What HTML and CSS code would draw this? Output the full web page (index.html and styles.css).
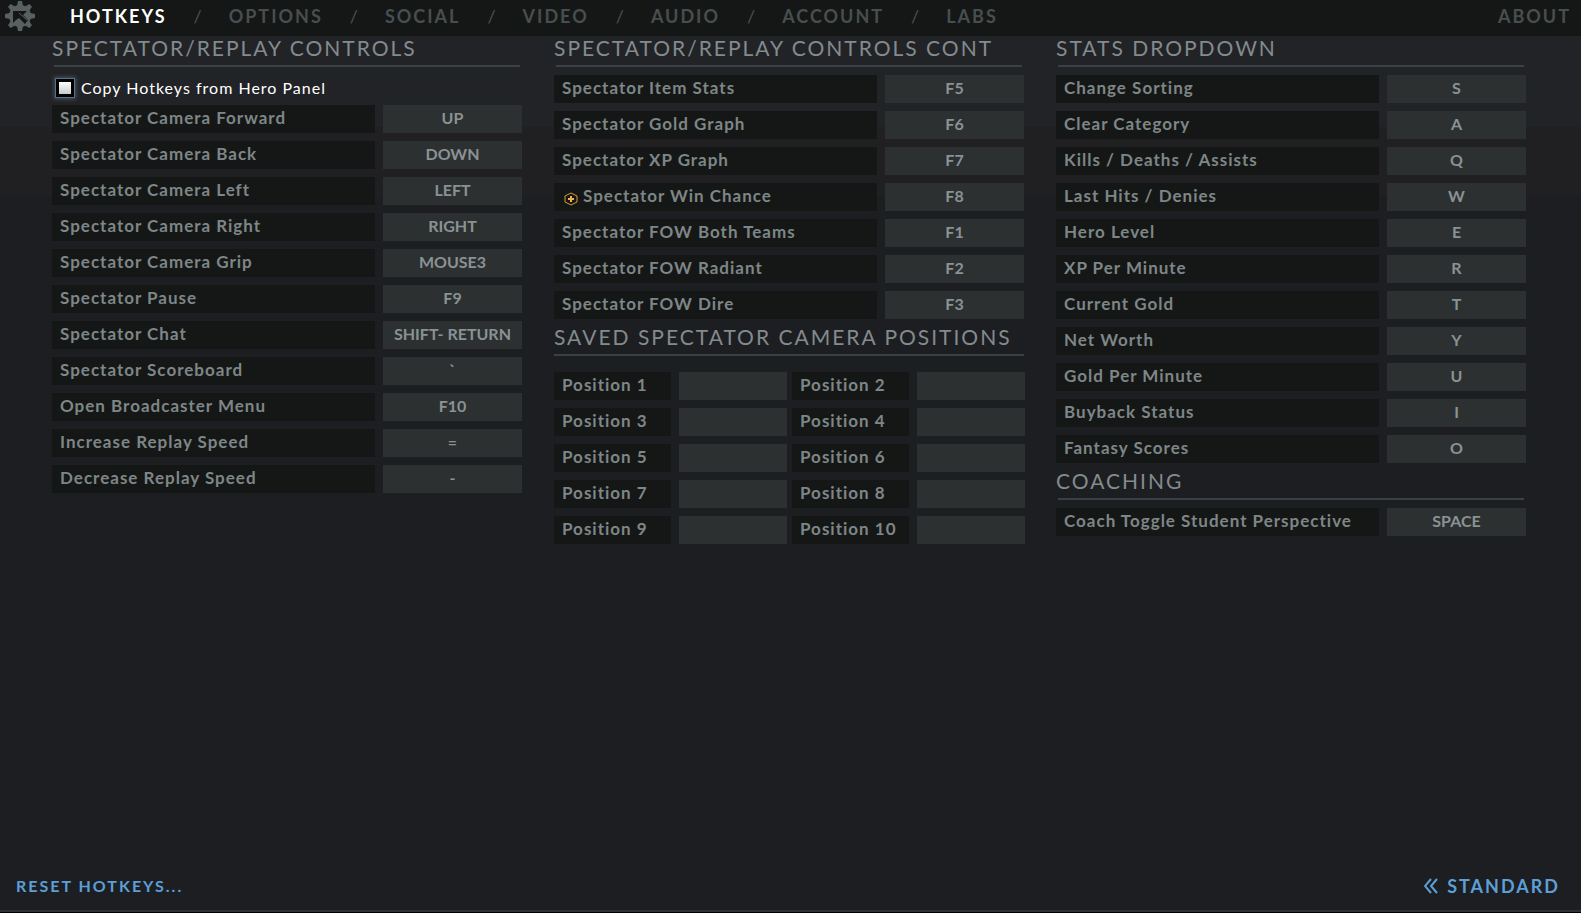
FILE: index.html
```html
<!DOCTYPE html>
<html lang="en">
<head>
<meta charset="utf-8">
<title>Settings - Hotkeys</title>
<link rel="stylesheet" href="styles.css">
</head>
<body>

<header class="topbar">
  <svg class="gear" viewBox="0 0 30 30" aria-hidden="true">
    <g fill="#596062">
      <circle cx="15" cy="15" r="11"/>
      <path d="M12 5 L13 0 H17 L18 5 V25 L17 30 H13 L12 25 Z"/>
      <path d="M12 5 L13 0 H17 L18 5 V25 L17 30 H13 L12 25 Z" transform="rotate(45 15 15)"/>
      <path d="M12 5 L13 0 H17 L18 5 V25 L17 30 H13 L12 25 Z" transform="rotate(90 15 15)"/>
      <path d="M12 5 L13 0 H17 L18 5 V25 L17 30 H13 L12 25 Z" transform="rotate(135 15 15)"/>
    </g>
    <path d="M8 10 H22 L18 14 L23 19 L20 23 L14 17 L11 19 L8 22 Z" fill="#151716"/>
    <path d="M14 12 L22 19" stroke="#596062" stroke-width="1"/>
  </svg>
  <nav class="tabs">
    <a class="tab active" href="#hotkeys">HOTKEYS</a>
    <span class="sep">/</span>
    <a class="tab" href="#options">OPTIONS</a>
    <span class="sep">/</span>
    <a class="tab" href="#social">SOCIAL</a>
    <span class="sep">/</span>
    <a class="tab" href="#video">VIDEO</a>
    <span class="sep">/</span>
    <a class="tab" href="#audio">AUDIO</a>
    <span class="sep">/</span>
    <a class="tab" href="#account">ACCOUNT</a>
    <span class="sep">/</span>
    <a class="tab" href="#labs">LABS</a>
  </nav>
  <a class="tab about" href="#about">ABOUT</a>
</header>

<main class="columns">
  <section class="column">
    <h2>SPECTATOR/REPLAY CONTROLS</h2>
    <label class="check"><input type="checkbox" checked> Copy Hotkeys from Hero Panel</label>
    <div class="bind"><label for="cam-forward">Spectator Camera Forward</label><button id="cam-forward">UP</button></div>
    <div class="bind"><label for="cam-back">Spectator Camera Back</label><button id="cam-back">DOWN</button></div>
    <div class="bind"><label for="cam-left">Spectator Camera Left</label><button id="cam-left">LEFT</button></div>
    <div class="bind"><label for="cam-right">Spectator Camera Right</label><button id="cam-right">RIGHT</button></div>
    <div class="bind"><label for="cam-grip">Spectator Camera Grip</label><button id="cam-grip">MOUSE3</button></div>
    <div class="bind"><label for="pause">Spectator Pause</label><button id="pause">F9</button></div>
    <div class="bind"><label for="chat">Spectator Chat</label><button id="chat">SHIFT- RETURN</button></div>
    <div class="bind"><label for="scoreboard">Spectator Scoreboard</label><button id="scoreboard">`</button></div>
    <div class="bind"><label for="broadcaster">Open Broadcaster Menu</label><button id="broadcaster">F10</button></div>
    <div class="bind"><label for="speed-up">Increase Replay Speed</label><button id="speed-up">=</button></div>
    <div class="bind"><label for="speed-down">Decrease Replay Speed</label><button id="speed-down">-</button></div>
  </section>

  <section class="column">
    <h2>SPECTATOR/REPLAY CONTROLS CONT</h2>
    <div class="bind"><label for="item-stats">Spectator Item Stats</label><button id="item-stats">F5</button></div>
    <div class="bind"><label for="gold-graph">Spectator Gold Graph</label><button id="gold-graph">F6</button></div>
    <div class="bind"><label for="xp-graph">Spectator XP Graph</label><button id="xp-graph">F7</button></div>
    <div class="bind">
      <label for="win-chance"><svg class="plus" viewBox="0 0 14 14" aria-hidden="true"><path d="M7 1 L13 4 V10 L7 13 L1 10 V4 Z" fill="none" stroke="#d79a3c"/><path d="M7 4 V10 M4 7 H10" stroke="#f0b04a" stroke-width="2"/></svg>Spectator Win Chance</label>
      <button id="win-chance">F8</button>
    </div>
    <div class="bind"><label for="fow-both">Spectator FOW Both Teams</label><button id="fow-both">F1</button></div>
    <div class="bind"><label for="fow-radiant">Spectator FOW Radiant</label><button id="fow-radiant">F2</button></div>
    <div class="bind"><label for="fow-dire">Spectator FOW Dire</label><button id="fow-dire">F3</button></div>

    <h2 class="wide">SAVED SPECTATOR CAMERA POSITIONS</h2>
    <div class="positions">
      <div class="bind"><label for="pos1">Position 1</label><button id="pos1"></button></div>
      <div class="bind"><label for="pos2">Position 2</label><button id="pos2"></button></div>
      <div class="bind"><label for="pos3">Position 3</label><button id="pos3"></button></div>
      <div class="bind"><label for="pos4">Position 4</label><button id="pos4"></button></div>
      <div class="bind"><label for="pos5">Position 5</label><button id="pos5"></button></div>
      <div class="bind"><label for="pos6">Position 6</label><button id="pos6"></button></div>
      <div class="bind"><label for="pos7">Position 7</label><button id="pos7"></button></div>
      <div class="bind"><label for="pos8">Position 8</label><button id="pos8"></button></div>
      <div class="bind"><label for="pos9">Position 9</label><button id="pos9"></button></div>
      <div class="bind"><label for="pos10">Position 10</label><button id="pos10"></button></div>
    </div>
  </section>

  <section class="column">
    <h2>STATS DROPDOWN</h2>
    <div class="bind"><label for="sorting">Change Sorting</label><button id="sorting">S</button></div>
    <div class="bind"><label for="clear">Clear Category</label><button id="clear">A</button></div>
    <div class="bind"><label for="kda">Kills / Deaths / Assists</label><button id="kda">Q</button></div>
    <div class="bind"><label for="last-hits">Last Hits / Denies</label><button id="last-hits">W</button></div>
    <div class="bind"><label for="level">Hero Level</label><button id="level">E</button></div>
    <div class="bind"><label for="xpm">XP Per Minute</label><button id="xpm">R</button></div>
    <div class="bind"><label for="gold">Current Gold</label><button id="gold">T</button></div>
    <div class="bind"><label for="net-worth">Net Worth</label><button id="net-worth">Y</button></div>
    <div class="bind"><label for="gpm">Gold Per Minute</label><button id="gpm">U</button></div>
    <div class="bind"><label for="buyback">Buyback Status</label><button id="buyback">I</button></div>
    <div class="bind"><label for="fantasy">Fantasy Scores</label><button id="fantasy">O</button></div>

    <h2>COACHING</h2>
    <div class="bind"><label for="coach">Coach Toggle Student Perspective</label><button id="coach">SPACE</button></div>
  </section>
</main>

<footer class="bottom">
  <button class="link">RESET HOTKEYS...</button>
  <button class="link standard">
    <svg class="chevrons" viewBox="0 0 14 16" aria-hidden="true"><path d="M7 1 L1 8 L7 15 M13 1 L7 8 L13 15" fill="none" stroke="#5c9fd6" stroke-width="2"/></svg>
    STANDARD
  </button>
</footer>

</body>
</html>
```
FILE: styles.css
```css
* {
  box-sizing: border-box;
}

body {
  display: flex;
  flex-direction: column;
  min-height: 100vh;
  margin: 0;
  border-bottom: 1px solid #000;
  background: linear-gradient(#222327 127px, #202022 127px, #202022 197px, #1d1e22 197px);
  color: #7e8687;
  font-family: Lato, "Open Sans", sans-serif;
  font-size: 16px;
  line-height: 20px;
}

button {
  border: 0;
  padding: 0;
  font: inherit;
  color: inherit;
}

/* top bar */

.topbar {
  display: flex;
  align-items: center;
  height: 36px;
  padding: 0 10px 4px 5px;
  background: #151716;
}

.gear {
  width: 30px;
  height: 30px;
}

.tabs {
  display: flex;
  gap: 27px;
  margin-left: 35px;
}

.tab {
  color: #484e50;
  font-size: 18px;
  font-weight: bold;
  letter-spacing: 2px;
  text-decoration: none;
}

.tab.active {
  color: #fff;
}

.sep {
  color: #484e50;
  font-size: 18px;
}

.about {
  margin-left: auto;
}

/* hotkey columns */

.columns {
  display: grid;
  grid-template-columns: repeat(3, 1fr);
  gap: 32px;
  padding: 2px 55px 0 52px;
}

h2 {
  margin: 0 0 8px;
  color: #838b8d;
  font-size: 21px;
  font-weight: normal;
  letter-spacing: 2px;
  line-height: 20px;
  white-space: nowrap;
}

h2::after {
  content: "";
  display: block;
  height: 2px;
  margin: 7px 2px 0;
  background: #3a4143;
}

h2.wide {
  margin-bottom: 16px;
}

h2.wide::after {
  margin: 7px 0 0;
}

.check {
  display: flex;
  align-items: center;
  gap: 7px;
  height: 30px;
  padding: 0 0 4px 4px;
  color: #fff;
  letter-spacing: 1px;
}

.check input {
  appearance: none;
  width: 18px;
  height: 18px;
  margin: 0;
  border: 3px solid #000;
  outline: 1px solid #4f7291;
  background: linear-gradient(#fff, #c6cccd);
  box-shadow: 0 0 4px 2px #4a5254;
}

.bind {
  display: grid;
  grid-template-columns: 323fr 139fr;
  gap: 8px;
  height: 28px;
  margin-bottom: 8px;
  line-height: 26px;
}

.bind label {
  padding-left: 8px;
  background: #151716;
  font-size: 17px;
  font-weight: bold;
  letter-spacing: 1px;
  white-space: nowrap;
}

.bind button {
  padding-bottom: 2px;
  background: #2c3031;
  color: #8a9294;
  font-weight: bold;
}

.plus {
  width: 14px;
  height: 14px;
  margin: 0 5px 0 2px;
  vertical-align: -4px;
}

.positions {
  display: grid;
  grid-template-columns: 1fr 1fr;
  column-gap: 5px;
  margin-right: -1px;
}

.positions .bind {
  grid-template-columns: 117fr 108fr;
}

/* bottom bar */

.bottom {
  display: flex;
  justify-content: space-between;
  margin-top: auto;
  padding: 0 21px 14px 16px;
  border-bottom: 2px solid #303132;
}

.link {
  background: none;
  color: #5c9fd6;
  font-size: 16px;
  font-weight: bold;
  letter-spacing: 2px;
}

.standard {
  display: flex;
  align-items: center;
  gap: 9px;
  font-size: 18px;
}

.chevrons {
  width: 14px;
  height: 16px;
}
```
